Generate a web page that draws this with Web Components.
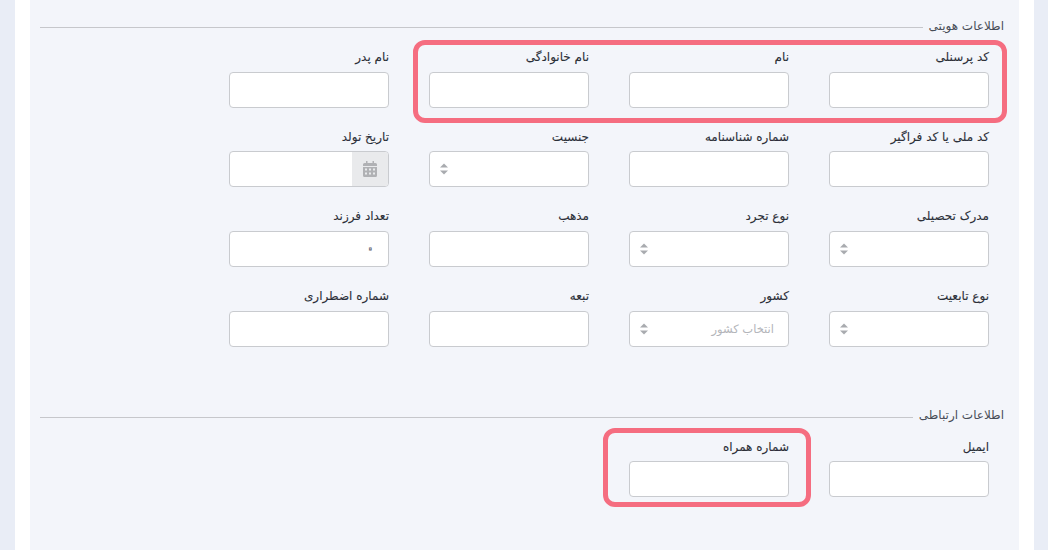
<!DOCTYPE html>
<html lang="fa">
<head>
<meta charset="utf-8">
<title>فرم پرسنلی</title>
<style>
html, body { margin: 0; height: 100%; overflow: hidden; }
body { font-family: "DejaVu Sans", sans-serif; background: #e9edf6; }
</style>
</head>
<body>

<template id="page-tpl">
<style>
:host { display: block; height: 550px; padding: 0 14px 0 15px; box-sizing: border-box; }
.card { background: #fff; height: 100%; padding: 0 15px; box-sizing: border-box; }
.panel { background: #f3f5fa; height: 100%; box-sizing: border-box; padding: 17px 15px 0 10px; position: relative; }
</style>
<div class="card"><div class="panel"><slot></slot></div></div>
</template>

<template id="section-tpl">
<style>
:host { display: block; direction: rtl; }
.head { display: flex; align-items: center; height: 17px; color: #484d57; font-size: 12px; }
.head span { padding-left: 6px; white-space: nowrap; }
.head i { flex: 1; height: 1px; background: #c6c7cb; margin-top: 4px; }
.grid { display: grid; grid-template-columns: repeat(4, 160px); column-gap: 40px; row-gap: 20px; padding: 13.9px 15px 0 0; }
</style>
<div class="head"><span></span><i></i></div>
<div class="grid"><slot></slot></div>
</template>

<template id="field-tpl">
<style>
:host { display: block; position: relative; }
label { display: block; height: 23.7px; line-height: 18px; font-size: 12px; color: #2b2f38; white-space: nowrap; -webkit-text-stroke: .1px #2b2f38; }
</style>
<label></label>
<slot></slot>
</template>

<template id="input-tpl">
<style>
:host { display: block; height: 36px; box-sizing: border-box; background: #fff; border: 1px solid #c9cbcf; border-radius: 4px; overflow: hidden; }
.text { display: block; line-height: 32px; padding: 0 13px; font-size: 17px; color: #fff; -webkit-text-stroke: .8px #5c6270; }
</style>
<span class="text"><slot></slot></span>
</template>

<template id="select-tpl">
<style>
:host { display: flex; align-items: center; justify-content: space-between; height: 36px; box-sizing: border-box; background: #fff; border: 1px solid #c9cbcf; border-radius: 4px; padding: 0 10px 0 10px; direction: rtl; }
.ph { font-size: 11.5px; color: #b3b5ba; padding-right: 4px; white-space: nowrap; }
svg { display: block; width: 8px; height: 12px; }
</style>
<span class="ph"><slot></slot></span>
<svg viewBox="0 0 8 12"><path d="M4 0.5 8 4.500H0Z M0 7.500H8L4 11.500Z" fill="#a9abaf"/></svg>
</template>

<template id="date-tpl">
<style>
:host { display: flex; height: 36px; box-sizing: border-box; background: #fff; border: 1px solid #c9cbcf; border-radius: 4px; overflow: hidden; direction: ltr; }
.fill { flex: 1; }
.addon { width: 36px; background: #e9eaec; display: flex; align-items: center; justify-content: center; }
svg { display: block; width: 14px; height: 16px; }
</style>
<div class="fill"></div>
<div class="addon">
<svg viewBox="0 0 14 16"><path fill-rule="evenodd" fill="#b0b1b4" d="M3 0h1.500v2h5V0H11v2h1.500A1.500 1.500 0 0 1 14 3.500V5H0V3.500A1.500 1.500 0 0 1 1.500 2H3Z M0 6h14v8.500a1.500 1.500 0 0 1-1.500 1.500h-11A1.500 1.500 0 0 1 0 14.500Z M2 7.500v2h2v-2Z M6 7.500v2h2v-2Z M10 7.500v2h2v-2Z M2 11.500v2h2v-2Z M6 11.500v2h2v-2Z M10 11.500v2h2v-2Z"/></svg>
</div>
</template>

<template id="mark-tpl">
<style>
:host { display: block; position: absolute; box-sizing: border-box; border: 5px solid #f56d80; border-radius: 12px; pointer-events: none; }
</style>
</template>

<x-page>
  <x-section title="اطلاعات هویتی">
    <x-field label="کد پرسنلی"><x-input></x-input></x-field>
    <x-field label="نام"><x-input></x-input></x-field>
    <x-field label="نام خانوادگی"><x-input></x-input></x-field>
    <x-field label="نام پدر"><x-input></x-input></x-field>

    <x-field label="کد ملی یا کد فراگیر"><x-input></x-input></x-field>
    <x-field label="شماره شناسنامه"><x-input></x-input></x-field>
    <x-field label="جنسیت"><x-select></x-select></x-field>
    <x-field label="تاریخ تولد"><x-date></x-date></x-field>

    <x-field label="مدرک تحصیلی"><x-select></x-select></x-field>
    <x-field label="نوع تجرد"><x-select></x-select></x-field>
    <x-field label="مذهب"><x-input></x-input></x-field>
    <x-field label="تعداد فرزند"><x-input>۰</x-input></x-field>

    <x-field label="نوع تابعیت"><x-select></x-select></x-field>
    <x-field label="کشور"><x-select>انتخاب کشور</x-select></x-field>
    <x-field label="تبعه"><x-input></x-input></x-field>
    <x-field label="شماره اضطراری"><x-input></x-input></x-field>
  </x-section>

  <x-section title="اطلاعات ارتباطی" style="margin-top:60.1px">
    <x-field label="ایمیل"><x-input></x-input></x-field>
    <x-field label="شماره همراه"><x-input></x-input></x-field>
  </x-section>

  <x-mark style="left:383px;top:40px;width:594px;height:83px"></x-mark>
  <x-mark style="left:573px;top:428px;width:208px;height:79px"></x-mark>
</x-page>

<script>
class BaseElement extends HTMLElement {
  constructor(tplId) {
    super();
    const root = this.attachShadow({ mode: 'open' });
    root.appendChild(document.getElementById(tplId).content.cloneNode(true));
  }
}

class XPage extends BaseElement { constructor() { super('page-tpl'); } }

class XSection extends BaseElement {
  constructor() { super('section-tpl'); }
  connectedCallback() {
    this.shadowRoot.querySelector('.head span').textContent = this.getAttribute('title');
    this.removeAttribute('title');
  }
}

class XField extends BaseElement {
  constructor() { super('field-tpl'); }
  connectedCallback() {
    this.shadowRoot.querySelector('label').textContent = this.getAttribute('label');
  }
}

class XInput extends BaseElement { constructor() { super('input-tpl'); } }
class XSelect extends BaseElement { constructor() { super('select-tpl'); } }
class XDate extends BaseElement { constructor() { super('date-tpl'); } }
class XMark extends BaseElement { constructor() { super('mark-tpl'); } }

customElements.define('x-page', XPage);
customElements.define('x-section', XSection);
customElements.define('x-field', XField);
customElements.define('x-input', XInput);
customElements.define('x-select', XSelect);
customElements.define('x-date', XDate);
customElements.define('x-mark', XMark);
</script>
</body>
</html>
